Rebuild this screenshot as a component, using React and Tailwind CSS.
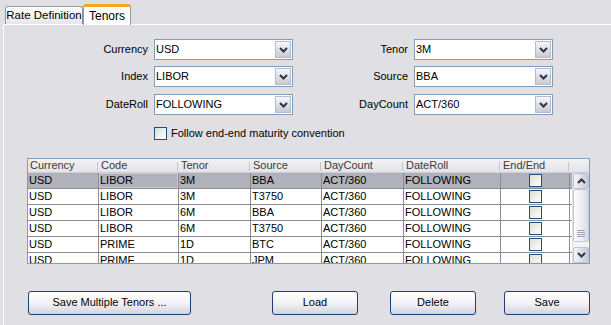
import React from "react";

const cols = [
    { key: "cur", label: "Currency", w: "w-[71px]" },
    { key: "code", label: "Code", w: "w-[80px]" },
    { key: "tenor", label: "Tenor", w: "w-[72px]" },
    { key: "src", label: "Source", w: "w-[71px]" },
    { key: "dc", label: "DayCount", w: "w-[82px]" },
    { key: "dr", label: "DateRoll", w: "w-[97px]" },
];

const rows = [
    { cur: "USD", code: "LIBOR", tenor: "3M", src: "BBA", dc: "ACT/360", dr: "FOLLOWING" },
    { cur: "USD", code: "LIBOR", tenor: "3M", src: "T3750", dc: "ACT/360", dr: "FOLLOWING" },
    { cur: "USD", code: "LIBOR", tenor: "6M", src: "BBA", dc: "ACT/360", dr: "FOLLOWING" },
    { cur: "USD", code: "LIBOR", tenor: "6M", src: "T3750", dc: "ACT/360", dr: "FOLLOWING" },
    { cur: "USD", code: "PRIME", tenor: "1D", src: "BTC", dc: "ACT/360", dr: "FOLLOWING" },
    { cur: "USD", code: "PRIME", tenor: "1D", src: "JPM", dc: "ACT/360", dr: "FOLLOWING" },
];

function Chevron({ up }) {
    return (
        <svg width="9" height="6" viewBox="0 0 9 6">
            <path d={up ? "M1 5 L4.5 1.5 L8 5" : "M1 1 L4.5 4.5 L8 1"} fill="none" stroke="#2e3440" strokeWidth="2" />
        </svg>
    );
}

function Combo({ value }) {
    return (
        <div className="w-[139px] h-[21px] border border-[#7f9db9] bg-white flex items-center">
            <span className="flex-1 pl-[1px] leading-none">{value}</span>
            <div className="w-[16px] h-[17px] mr-[1px] border border-[#b5bcc9] bg-gradient-to-b from-[#f7f7fa] to-[#c9c9d6] flex items-center justify-center">
                <Chevron />
            </div>
        </div>
    );
}

function Box() {
    return <div className="w-[13px] h-[13px] border border-[#1c5180] bg-gradient-to-br from-[#dcdcd7] to-white" />;
}

function Field({ label, value, lw }) {
    return (
        <>
            <div className={`${lw} pr-[6px] text-right`}>{label}</div>
            <Combo value={value} />
        </>
    );
}

function Button({ children, w }) {
    return (
        <button className={`${w} h-[24px] border border-[#1f3f72] rounded-[3px] bg-gradient-to-b from-white via-[#f3f3f6] to-[#d3d3de] text-black`}>
            {children}
        </button>
    );
}

export default function App() {
    return (
        <div className="w-[611px] h-[325px] bg-[#e0dfe3] text-[11px] text-black flex flex-col overflow-hidden" style={{ fontFamily: "'Liberation Sans', Arial, sans-serif" }}>
            {/* tabs */}
            <div className="h-[24px] pl-[5px] flex items-end relative z-10">
                <div className="w-[78px] h-[18px] border border-b-0 border-[#919b9c] rounded-t-[3px] bg-gradient-to-b from-white to-[#e6e5ec] flex items-center justify-center text-[11.5px] whitespace-nowrap">
                    Rate Definition
                </div>
                <div className="w-[48px] h-[21px] -mb-[1px] border-x border-[#919b9c] rounded-t-[3px] bg-white border-t-[3px] border-t-[#f5a623] flex items-center justify-center text-[12px]">
                    Tenors
                </div>
            </div>

            <div className="flex-1 ml-[3px] border-l border-t border-white flex flex-col">
                {/* form */}
                <div className="pt-[14px] flex flex-col">
                    <div className="flex items-center">
                        <Field label="Currency" value="USD" lw="w-[150px]" />
                        <Field label="Tenor" value="3M" lw="w-[121px]" />
                    </div>
                    <div className="flex items-center mt-[6px]">
                        <Field label="Index" value="LIBOR" lw="w-[150px]" />
                        <Field label="Source" value="BBA" lw="w-[121px]" />
                    </div>
                    <div className="flex items-center mt-[7px]">
                        <Field label="DateRoll" value="FOLLOWING" lw="w-[150px]" />
                        <Field label="DayCount" value="ACT/360" lw="w-[121px]" />
                    </div>
                    <div className="flex items-center mt-[10px] pl-[150px] gap-[4px]">
                        <Box />
                        <span>Follow end-end maturity convention</span>
                    </div>
                </div>

                {/* table */}
                <div className="ml-[23px] mt-[16px] w-[563px] h-[106px] border border-[#7f9db9] bg-[#e0dfe3] flex flex-col">
                    <div className="h-[14px] flex bg-gradient-to-b from-[#f2f2f4] to-[#e4e3e9] border-b border-[#cfced6] text-[#3a3a3a]">
                        {cols.map((c) => (
                            <div key={c.key} className={`${c.w} h-full pl-[2px] flex items-center relative leading-none`}>
                                {c.label}
                                <span className="absolute right-[1px] top-[3px] h-[9px] w-[1px] bg-[#c5c5cf]" />
                            </div>
                        ))}
                        <div className="w-[69px] h-full pl-[2px] flex items-center relative leading-none">
                            End/End
                            <span className="absolute right-[1px] top-[3px] h-[9px] w-[1px] bg-[#c5c5cf]" />
                        </div>
                        <div className="flex-1" />
                    </div>
                    <div className="flex flex-1 overflow-hidden">
                        <div className="w-[544px] bg-white overflow-hidden">
                            {rows.map((r, i) => (
                                <div key={i} className={`h-[16px] flex border-b border-[#8c8c8c] ${i === 0 ? "bg-[#b1b1bb]" : ""}`}>
                                    {cols.map((c) => (
                                        <div key={c.key} className={`${c.w} h-full relative flex items-center leading-none pl-[1px] border-r border-[#8c8c8c]`}>
                                            {r[c.key]}
                                            {i === 0 && c.key === "code" && (
                                                <span className="absolute left-0 top-0 right-0 bottom-0 border border-[#f0e000]" />
                                            )}
                                        </div>
                                    ))}
                                    <div className="w-[69px] h-full border-r border-[#8c8c8c] flex items-center justify-center">
                                        <Box />
                                    </div>
                                </div>
                            ))}
                        </div>
                        <div className="w-[1px]" />
                        {/* scrollbar */}
                        <div className="w-[16px] flex flex-col bg-[#f4f4f0]">
                            <div className="h-[16px] border border-[#b9c3d6] rounded-[2px] bg-gradient-to-r from-[#f4f4fa] to-[#c8c8d8] flex items-center justify-center">
                                <Chevron up />
                            </div>
                            <div className="flex-1 flex flex-col">
                                <div className="flex-1 border border-[#c3c8d8] rounded-[2px] bg-gradient-to-r from-white to-[#dcdce8] flex flex-col justify-end items-center pb-[4px] gap-[1px]">
                                    <span className="w-[8px] h-[1px] bg-[#9aa3b8]" />
                                    <span className="w-[8px] h-[1px] bg-[#9aa3b8]" />
                                    <span className="w-[8px] h-[1px] bg-[#9aa3b8]" />
                                    <span className="w-[8px] h-[1px] bg-[#9aa3b8]" />
                                </div>
                                <div className="h-[5px]" />
                            </div>
                            <div className="h-[16px] border border-[#b9c3d6] rounded-[2px] bg-gradient-to-r from-[#f4f4fa] to-[#c8c8d8] flex items-center justify-center">
                                <Chevron />
                            </div>
                        </div>
                    </div>
                </div>

                {/* buttons */}
                <div className="mt-[27px] flex items-center pl-[24px]">
                    <Button w="w-[163px]">Save Multiple Tenors ...</Button>
                    <div className="w-[81px]" />
                    <Button w="w-[86px]">Load</Button>
                    <div className="w-[32px]" />
                    <Button w="w-[86px]">Delete</Button>
                    <div className="w-[28px]" />
                    <Button w="w-[86px]">Save</Button>
                </div>
            </div>
        </div>
    );
}
